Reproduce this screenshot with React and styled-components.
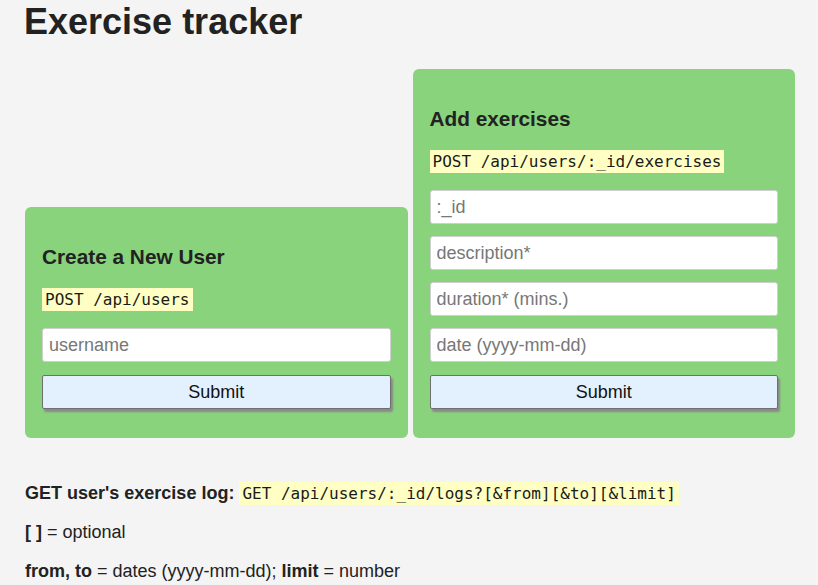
import React from 'react';
import styled, { createGlobalStyle } from 'styled-components';

const GlobalStyle = createGlobalStyle`
* {
  box-sizing: border-box;
}
body {
  margin: 0;
  background: #f4f4f4;
  color: #222;
  font-family: "Liberation Sans", Arial, Helvetica, sans-serif;
  font-size: 16px;
}
`;

const Page = styled.div`
padding: 0 23px 0 25px;
`;

const Title = styled.h1`
margin: 0 0 0 -1px;
font-size: 36px;
line-height: 44px;
font-weight: 700;
color: #222;
`;

const Cards = styled.div`
display: flex;
align-items: flex-end;
gap: 5px;
margin-top: 25px;
`;

const Card = styled.form`
flex: 1;
display: flex;
flex-direction: column;
background: #88d37c;
border-radius: 6px;
padding: 15px 17px 29px;
`;

const CardTitle = styled.h3`
margin: 20px 0 0;
font-size: 20.8px;
line-height: 29px;
font-weight: 700;
color: #222;
`;

const Endpoint = styled.p`
margin: 17px 0 17px;
font-size: 16px;
line-height: 23px;
`;

const Code = styled.code`
font-family: "DejaVu Sans Mono", "Liberation Mono", monospace;
font-size: 16px;
padding: 2px 3px;
background: #ffffc4;
color: #1a1a1a;
`;

const Fields = styled.div`
display: flex;
flex-direction: column;
gap: 12px;
`;

const Input = styled.input`
height: 34px;
width: 100%;
border: 1px solid #cfcfcf;
border-radius: 3px;
padding: 0 6px;
font-family: "Liberation Sans", Arial, sans-serif;
font-size: 18px;
color: #222;
background: #fff;
outline: none;
&::placeholder {
  color: #777;
}
`;

const Button = styled.button`
height: 34px;
width: 100%;
margin-top: 1px;
border: 1px solid #6f6f6f;
border-radius: 2px;
background: #e3f0fd;
box-shadow: 2px 3px 2px #8a8a8a;
font-family: "Liberation Sans", Arial, sans-serif;
font-size: 18px;
color: #111;
cursor: pointer;
`;

const Notes = styled.div`
margin-top: 43px;
`;

const Note = styled.p`
margin: 0 0 14px;
font-size: 18px;
line-height: 25px;
color: #222;
`;

function App() {
  return (
    <>
      <GlobalStyle />
      <Page>
        <Title>Exercise tracker</Title>
        <Cards>
          <Card onSubmit={(e) => e.preventDefault()}>
            <CardTitle>Create a New User</CardTitle>
            <Endpoint><Code>POST /api/users</Code></Endpoint>
            <Fields>
              <Input type="text" name="username" placeholder="username" />
              <Button type="submit">Submit</Button>
            </Fields>
          </Card>
          <Card onSubmit={(e) => e.preventDefault()}>
            <CardTitle>Add exercises</CardTitle>
            <Endpoint><Code>POST /api/users/:_id/exercises</Code></Endpoint>
            <Fields>
              <Input type="text" name=":_id" placeholder=":_id" />
              <Input type="text" name="description" placeholder="description*" />
              <Input type="text" name="duration" placeholder="duration* (mins.)" />
              <Input type="text" name="date" placeholder="date (yyyy-mm-dd)" />
              <Button type="submit">Submit</Button>
            </Fields>
          </Card>
        </Cards>
        <Notes>
          <Note>
            <strong>GET user's exercise log: </strong>
            <Code>GET /api/users/:_id/logs?[&amp;from][&amp;to][&amp;limit]</Code>
          </Note>
          <Note><strong>[ ]</strong> = optional</Note>
          <Note><strong>from, to</strong> = dates (yyyy-mm-dd); <strong>limit</strong> = number</Note>
        </Notes>
      </Page>
    </>
  );
}

export default App;
